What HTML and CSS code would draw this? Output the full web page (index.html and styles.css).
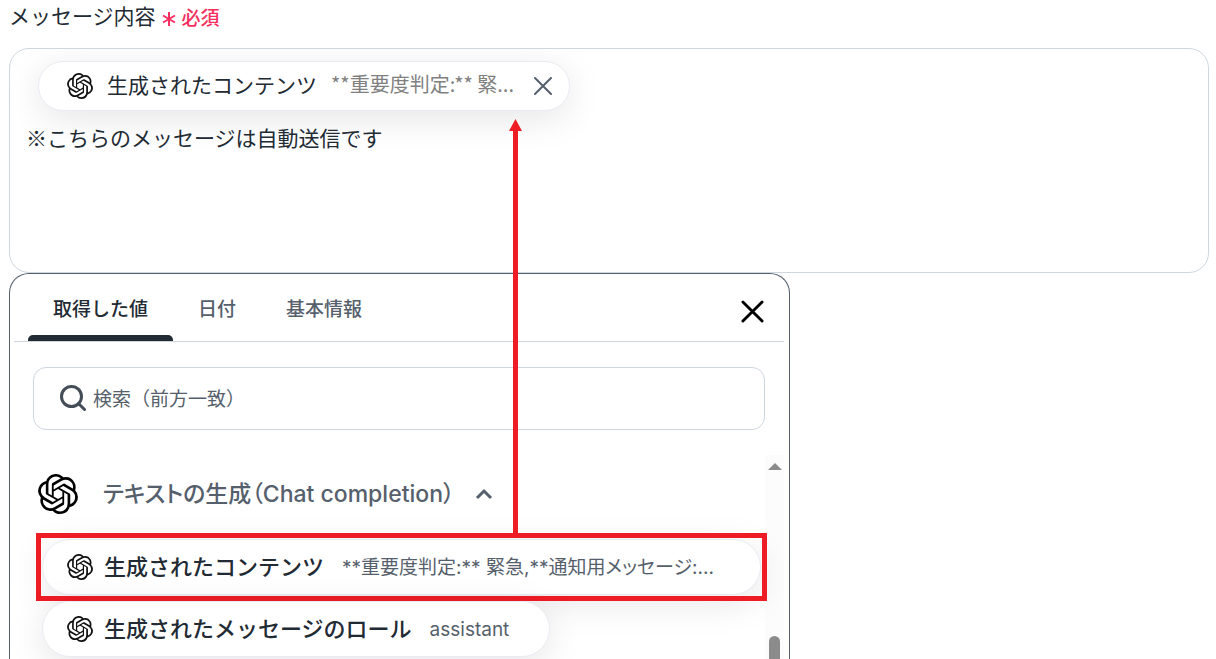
FILE: index.html
```html
<!DOCTYPE html>
<html lang="ja">
<head>
<meta charset="utf-8">
<meta name="viewport" content="width=device-width, initial-scale=1">
<title>メッセージ内容</title>
<link rel="stylesheet" href="styles.css">
</head>
<body>
<svg class="defs" aria-hidden="true">
  <symbol id="openai" viewBox="0 0 24 24"><path d="M22.2819 9.8211a5.9847 5.9847 0 0 0-.5157-4.9108 6.0462 6.0462 0 0 0-6.5098-2.9A6.0651 6.0651 0 0 0 4.9807 4.1818a5.9847 5.9847 0 0 0-3.9977 2.9 6.0462 6.0462 0 0 0 .7427 7.0966 5.98 5.98 0 0 0 .511 4.9107 6.051 6.051 0 0 0 6.5146 2.9001A5.9847 5.9847 0 0 0 13.2599 24a6.0557 6.0557 0 0 0 5.7718-4.2058 5.9894 5.9894 0 0 0 3.9977-2.9001 6.0557 6.0557 0 0 0-.7475-7.0729zm-9.022 12.6081a4.4755 4.4755 0 0 1-2.8764-1.0408l.1419-.0804 4.7783-2.7582a.7948.7948 0 0 0 .3927-.6813v-6.7369l2.02 1.1686a.071.071 0 0 1 .038.052v5.5826a4.504 4.504 0 0 1-4.4945 4.4944zm-9.6607-4.1254a4.4708 4.4708 0 0 1-.5346-3.0137l.142.0852 4.783 2.7582a.7712.7712 0 0 0 .7806 0l5.8428-3.3685v2.3324a.0804.0804 0 0 1-.0332.0615L9.74 19.9502a4.4992 4.4992 0 0 1-6.1408-1.6464zM2.3408 7.8956a4.485 4.485 0 0 1 2.3655-1.9728V11.6a.7664.7664 0 0 0 .3879.6765l5.8144 3.3543-2.0201 1.1685a.0757.0757 0 0 1-.071 0l-4.8303-2.7865A4.504 4.504 0 0 1 2.3408 7.872zm16.5963 3.8558L13.1038 8.364 15.1192 7.2a.0757.0757 0 0 1 .071 0l4.8303 2.7913a4.4944 4.4944 0 0 1-.6765 8.1042v-5.6772a.79.79 0 0 0-.407-.667zm2.0107-3.0231l-.142-.0852-4.7735-2.7818a.7759.7759 0 0 0-.7854 0L9.409 9.2297V6.8974a.0662.0662 0 0 1 .0284-.0615l4.8303-2.7866a4.4992 4.4992 0 0 1 6.6802 4.66zM8.3065 12.863l-2.02-1.1638a.0804.0804 0 0 1-.038-.0567V6.0742a4.4992 4.4992 0 0 1 7.3757-3.4537l-.142.0805L8.704 5.459a.7948.7948 0 0 0-.3927.6813zm1.0976-2.3654l2.602-1.4998 2.6069 1.4998v2.9994l-2.5974 1.4997-2.6067-1.4997Z"/></symbol>
</svg>
<main class="page">
  <div class="field-label">
    <span id="message-label">メッセージ内容</span>
    <span class="required">
      <svg class="required-mark" viewBox="0 0 14 14" aria-hidden="true"><path d="M7 0v14M1 3.500l12 7M13 3.500L1 10.500"/></svg>
      必須
    </span>
  </div>

  <div class="editor" role="textbox" aria-multiline="true" aria-labelledby="message-label" tabindex="0">
    <span class="token">
      <svg class="logo" aria-hidden="true"><use href="#openai"/></svg>
      <span class="token-name">生成されたコンテンツ</span>
      <span class="token-value">**重要度判定:** 緊...</span>
      <button class="icon-button" type="button" aria-label="削除">
        <svg class="remove-icon" viewBox="0 0 18 18" aria-hidden="true"><path d="M1 1l16 16M17 1L1 17"/></svg>
      </button>
    </span>
    <p class="editor-text">※こちらのメッセージは自動送信です</p>
  </div>

  <section class="picker">
    <header class="picker-head">
      <div class="tabs" role="tablist">
        <button class="tab tab-active" type="button" role="tab" aria-selected="true">取得した値</button>
        <button class="tab" type="button" role="tab" aria-selected="false">日付</button>
        <button class="tab" type="button" role="tab" aria-selected="false">基本情報</button>
      </div>
      <button class="icon-button close" type="button" aria-label="閉じる">
        <svg class="close-icon" viewBox="0 0 24 24" aria-hidden="true"><path d="M2 2l20 20M22 2L2 22"/></svg>
      </button>
    </header>

    <label class="search">
      <svg class="search-icon" viewBox="0 0 26 26" aria-hidden="true"><circle cx="11.500" cy="11.500" r="10"/><path d="M18.500 18.500l6 6"/></svg>
      <input class="search-input" type="search" placeholder="検索（前方一致）" aria-label="検索（前方一致）">
    </label>

    <div class="results">
      <div class="results-list">
        <button class="group" type="button" aria-expanded="true">
          <svg class="logo logo-large" aria-hidden="true"><use href="#openai"/></svg>
          <span>テキストの生成（Chat completion）</span>
          <svg class="chevron" viewBox="0 0 18 12" aria-hidden="true"><path d="M2 10l7-7 7 7"/></svg>
        </button>
        <div class="option-row">
          <button class="option option-wide" type="button">
            <svg class="logo" aria-hidden="true"><use href="#openai"/></svg>
            <span class="option-name">生成されたコンテンツ</span>
            <span class="option-value">**重要度判定:** 緊急,**通知用メッセージ:...</span>
          </button>
          <div class="highlight" aria-hidden="true">
            <svg class="arrow" viewBox="0 0 13 419"><path d="M6.500 0L13 12H9V419H4V12H0z"/></svg>
          </div>
        </div>
        <div class="option-row">
          <button class="option" type="button">
            <svg class="logo" aria-hidden="true"><use href="#openai"/></svg>
            <span class="option-name">生成されたメッセージのロール</span>
            <span class="option-value">assistant</span>
          </button>
        </div>
      </div>
      <div class="scrollbar" aria-hidden="true">
        <span class="scroll-up"></span>
        <span class="scroll-thumb"></span>
      </div>
    </div>
  </section>
</main>
</body>
</html>
```
FILE: styles.css
```css
* {
  box-sizing: border-box;
}

body {
  margin: 0;
  color: #222a33;
  background: #fff;
  font-family: "Noto Sans CJK JP", sans-serif;
  font-size: 21px;
  line-height: 30px;
}

button {
  padding: 0;
  border: 0;
  background: none;
  color: inherit;
  font: inherit;
  cursor: pointer;
}

svg {
  display: block;
  flex: none;
}

.defs {
  position: absolute;
  width: 0;
  height: 0;
}

.page {
  display: flex;
  flex-direction: column;
  height: 100vh;
  padding: 0 7px 0 9px;
  overflow: hidden;
}

.field-label {
  display: flex;
  flex: none;
  align-items: center;
  gap: 6px;
  height: 30px;
  margin-bottom: 18px;
}

.required {
  display: flex;
  align-items: center;
  gap: 6px;
  padding-top: 4px;
  color: #f52e60;
  font-size: 19px;
  font-weight: 500;
}

.required-mark {
  width: 14px;
  height: 14px;
  margin-top: 4px;
  fill: none;
  stroke: currentColor;
  stroke-width: 2;
}

.editor {
  flex: none;
  min-height: 225px;
  padding: 12px 16px;
  border: 1px solid #cfd6df;
  border-radius: 20px;
  overflow: hidden;
}

.token {
  display: flex;
  align-items: center;
  width: fit-content;
  height: 50px;
  margin-left: 12px;
  padding: 0 17px 0 28px;
  border: 1px solid #e8ebf2;
  border-radius: 25px;
  background: #fff;
  box-shadow: 0 8px 36px rgba(0, 0, 0, 0.1);
}

.logo {
  width: 26px;
  height: 26px;
  fill: #111;
}

.logo-large {
  width: 40px;
  height: 40px;
  fill: #000;
}

.token-name {
  margin: 0 14px;
  padding-bottom: 4px;
}

.token-value {
  margin-right: 20px;
  padding-bottom: 4px;
  color: #808080;
  font-size: 20px;
}

.icon-button {
  display: flex;
}

.remove-icon {
  width: 18px;
  height: 18px;
  fill: none;
  stroke: #56606c;
  stroke-width: 2;
  stroke-linecap: round;
}

.editor-text {
  position: relative;
  margin: 11px 0 0;
}

.picker {
  display: flex;
  flex: 1;
  flex-direction: column;
  width: 100%;
  max-width: 781px;
  border: 1px solid #56606c;
  border-bottom: 0;
  border-radius: 20px 20px 0 0;
  background: #fff;
}

.picker-head {
  display: flex;
  flex: none;
  align-items: center;
  justify-content: space-between;
  height: 68px;
  margin: 0 5px 0 4px;
  padding: 0 20px 0 14px;
  border-bottom: 1px solid #cfd6df;
}

.tabs {
  display: flex;
  align-self: stretch;
}

.tab {
  position: relative;
  padding: 0 25px;
  color: #56606c;
  font-size: 19px;
  font-weight: 500;
}

.tab-active {
  color: #222a33;
}

.tab-active::after {
  position: absolute;
  right: 0;
  bottom: 0;
  left: 0;
  height: 6px;
  border-radius: 5px 5px 0 0;
  background: #222a33;
  content: "";
}

.close {
  padding-top: 8px;
}

.close-icon {
  width: 23px;
  height: 23px;
  fill: none;
  stroke: #000;
  stroke-width: 3;
  stroke-linecap: round;
}

.search {
  display: flex;
  flex: none;
  align-items: center;
  gap: 7px;
  height: 63px;
  margin: 25px 24px 25px 23px;
  padding: 0 26px 2px;
  border: 1px solid #cfd6df;
  border-radius: 13px;
}

.search-icon {
  width: 26px;
  height: 26px;
  fill: none;
  stroke: #434c57;
  stroke-width: 3;
  stroke-linecap: round;
}

.search-input {
  flex: 1;
  min-width: 0;
  padding: 0;
  border: 0;
  outline: 0;
  background: none;
  color: inherit;
  font: inherit;
  font-size: 19px;
}

.search-input::placeholder {
  color: #56606c;
  opacity: 1;
}

.results {
  display: flex;
  flex: 1;
  min-height: 0;
  padding-right: 5px;
}

.results-list {
  flex: 1;
  padding: 19px 4px 0 28px;
}

.group {
  display: flex;
  align-items: center;
  margin-bottom: 25px;
  color: #56606c;
  font-family: Inter, "Noto Sans CJK JP", sans-serif;
  font-size: 23px;
  font-weight: 500;
  font-feature-settings: "palt";
}

.group .logo {
  margin-right: 25px;
}

.chevron {
  width: 18px;
  height: 12px;
  margin-left: 20px;
  fill: none;
  stroke: #56606c;
  stroke-width: 3;
}

.option-row {
  position: relative;
  margin: 0 0 6px 4px;
}

.option {
  display: flex;
  align-items: center;
  height: 56px;
  padding: 0 40px 0 24px;
  border: 1px solid #e8ebf2;
  border-radius: 28px;
  background: #fff;
  box-shadow: 0 8px 36px rgba(0, 0, 0, 0.1);
}

.option-wide {
  width: 100%;
}

.option-name {
  margin: 0 18px 0 11px;
  padding-bottom: 4px;
  font-size: 22px;
  font-weight: 500;
}

.option-value {
  padding-top: 2px;
  color: #56606c;
  font-family: Inter, "Noto Sans CJK JP", sans-serif;
  font-size: 19px;
  font-feature-settings: "palt";
}

.highlight {
  position: absolute;
  inset: -6px;
  border: 5px solid #ee1c25;
}

.arrow {
  position: absolute;
  bottom: 100%;
  left: 468px;
  width: 13px;
  height: 419px;
  fill: #ee1c25;
}

.scrollbar {
  display: flex;
  flex-direction: column;
  align-items: center;
  width: 19px;
  padding-top: 8px;
  background: #fcfcfc;
}

.scroll-up {
  border: 7px solid transparent;
  border-top: 0;
  border-bottom-color: #8b8b8b;
}

.scroll-thumb {
  flex: 1;
  width: 11px;
  margin-top: 166px;
  border-radius: 6px 6px 0 0;
  background: #8b8b8b;
}
```
